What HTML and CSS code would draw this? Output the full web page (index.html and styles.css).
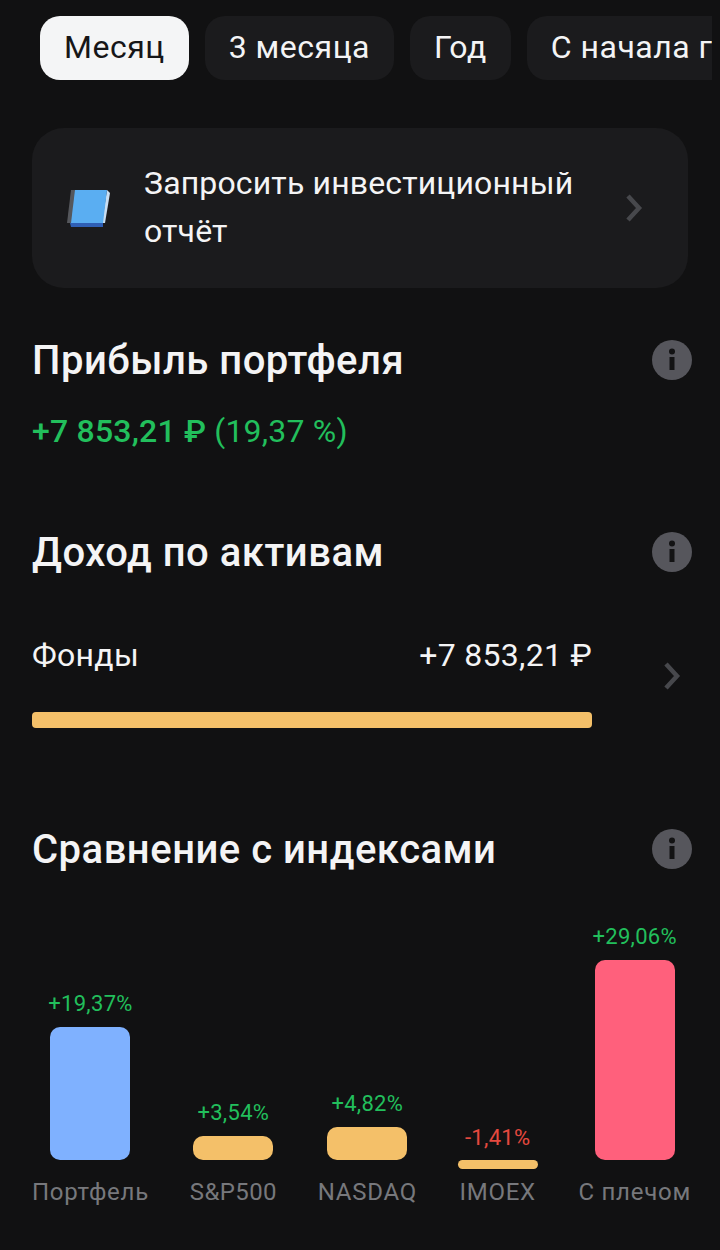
FILE: index.html
```html
<!DOCTYPE html>
<html lang="ru">
<head>
<meta charset="utf-8">
<title>Портфель</title>
<link rel="stylesheet" href="styles.css">
</head>
<body>
<main class="page">
  <nav class="tabs">
    <div class="tab tab-active">Месяц</div>
    <div class="tab">3 месяца</div>
    <div class="tab">Год</div>
    <div class="tab">С начала года</div>
  </nav>

  <section class="report">
    <svg class="book" viewBox="0 0 50 46" width="50" height="46" aria-hidden="true">
      <polygon points="3,38 7,5 12,5 8,38" fill="#55575c"/>
      <polygon points="6,38 11,37 39,38 39,42 7,42" fill="#2f5fb5"/>
      <polygon points="43,5 46,8 41,38 38,38" fill="#c9def2"/>
      <polygon points="11,5 43,5 39,38 7,38" fill="#5aaef2"/>
    </svg>
    <div class="report-text">Запросить инвестиционный отчёт</div>
    <svg class="chev" viewBox="0 0 20 30" width="20" height="30" aria-hidden="true"><polyline points="4,3 15,15 4,27" fill="none" stroke="#47484c" stroke-width="4.500"/></svg>
  </section>

  <section class="block block-profit">
    <div class="head">
      <h2>Прибыль портфеля</h2>
      <svg class="info" viewBox="0 0 40 40" width="40" height="40" aria-hidden="true"><circle cx="20" cy="20" r="20" fill="#56565c"/><circle cx="20" cy="11.500" r="3" fill="#131314"/><rect x="17.500" y="17" width="5" height="13" fill="#131314"/></svg>
    </div>
    <p class="profit"><b>+7 853,21 ₽</b> (19,37 %)</p>
  </section>

  <section class="block block-income">
    <div class="head">
      <h2>Доход по активам</h2>
      <svg class="info" viewBox="0 0 40 40" width="40" height="40" aria-hidden="true"><circle cx="20" cy="20" r="20" fill="#56565c"/><circle cx="20" cy="11.500" r="3" fill="#131314"/><rect x="17.500" y="17" width="5" height="13" fill="#131314"/></svg>
    </div>
    <div class="asset">
      <div class="asset-main">
        <div class="asset-row"><span>Фонды</span><span>+7 853,21 ₽</span></div>
        <div class="asset-bar"></div>
      </div>
      <svg class="chev" viewBox="0 0 20 30" width="20" height="30" aria-hidden="true"><polyline points="4,3 15,15 4,27" fill="none" stroke="#47484c" stroke-width="4.500"/></svg>
    </div>
  </section>

  <section class="block block-compare">
    <div class="head">
      <h2>Сравнение с индексами</h2>
      <svg class="info" viewBox="0 0 40 40" width="40" height="40" aria-hidden="true"><circle cx="20" cy="20" r="20" fill="#56565c"/><circle cx="20" cy="11.500" r="3" fill="#131314"/><rect x="17.500" y="17" width="5" height="13" fill="#131314"/></svg>
    </div>
    <div class="chart">
      <div class="col">
        <div class="plot"><span class="val">+19,37%</span><div class="bar blue" style="height:133px"></div></div>
        <div class="under"></div>
        <span class="name">Портфель</span>
      </div>
      <div class="col">
        <div class="plot"><span class="val">+3,54%</span><div class="bar yellow" style="height:24px"></div></div>
        <div class="under"></div>
        <span class="name name-tight">S&amp;P500</span>
      </div>
      <div class="col">
        <div class="plot"><span class="val">+4,82%</span><div class="bar yellow" style="height:33px"></div></div>
        <div class="under"></div>
        <span class="name">NASDAQ</span>
      </div>
      <div class="col">
        <div class="plot"><span class="val neg">-1,41%</span></div>
        <div class="under"><div class="bar yellow thin" style="height:9px"></div></div>
        <span class="name">IMOEX</span>
      </div>
      <div class="col">
        <div class="plot"><span class="val">+29,06%</span><div class="bar pink" style="height:200px"></div></div>
        <div class="under"></div>
        <span class="name">С плечом</span>
      </div>
    </div>
  </section>
</main>
</body>
</html>
```
FILE: styles.css
```css
* { box-sizing: border-box; }
html, body { margin: 0; height: 100%; background: #111112; }
body {
  font-family: Roboto, "Noto Sans", sans-serif;
  color: #f4f4f5;
  overflow: hidden;
}
.page { height: 1250px; overflow: hidden; padding-top: 16px; }

.tabs {
  display: flex;
  gap: 16px;
  margin: 0 8px 0 40px;
  overflow: hidden;
}
.tab {
  flex: none;
  height: 64px;
  padding: 0 24px 2px;
  display: flex;
  align-items: center;
  font-size: 32px;
  letter-spacing: 0.5px;
  background: #1b1b1d;
  border-radius: 20px;
  white-space: nowrap;
}
.tab-active { background: #f4f5f6; color: #161618; }

.report {
  margin: 48px 32px 0;
  height: 160px;
  background: #1b1b1d;
  border-radius: 32px;
  display: flex;
  align-items: center;
  padding: 0 32px;
}
.book { flex: none; margin-right: 30px; }
.report-text {
  width: 440px;
  margin-top: -2px;
  font-size: 32px;
  line-height: 48px;
  letter-spacing: 0.15px;
}
.report .chev { margin-left: auto; margin-right: 12px; }

.block { margin: 0 28px 0 32px; }
.block-profit { margin-top: 52px; }
.block-income { margin-top: 80px; }
.block-compare { margin-top: 101px; }

.head { display: flex; justify-content: space-between; align-items: center; height: 40px; }
h2 { margin: 2px 0 0; font-size: 40px; font-weight: 500; letter-spacing: 0.5px; line-height: 40px; }

.profit {
  margin: 30px 0 0;
  font-size: 32px;
  line-height: 42px;
  letter-spacing: 0.2px;
  color: #22bf5c;
}
.profit b { font-weight: 500; }

.asset { display: flex; align-items: center; margin-top: 63px; }
.asset-main { width: 560px; }
.asset-row {
  display: flex;
  justify-content: space-between;
  font-size: 32px;
  line-height: 40px;
  letter-spacing: 0.3px;
}
.asset-bar { height: 16px; margin-top: 37px; background: #f4c069; border-radius: 4px; }
.asset .chev { margin-left: 70px; margin-bottom: 11px; }

.chart {
  display: flex;
  justify-content: space-between;
  margin-top: 47px;
  width: 659px;
  align-items: flex-start;
}
.col { display: flex; flex-direction: column; align-items: center; }
.plot {
  height: 244px;
  display: flex;
  flex-direction: column;
  justify-content: flex-end;
  align-items: center;
}
.under { height: 16px; }
.val { font-size: 22px; line-height: 24px; margin-bottom: 11px; color: #22bf5c; letter-spacing: 0.3px; }
.val.neg { color: #e5493f; margin-bottom: 10px; }
.bar { width: 80px; border-radius: 10px; }
.bar.thin { border-radius: 5px; }
.blue { background: #7fb1ff; }
.yellow { background: #f4c069; }
.pink { background: #ff607c; }
.name { font-size: 24px; line-height: 32px; color: #77787c; letter-spacing: 0.75px; white-space: nowrap; }
.name-tight { letter-spacing: 0.4px; }
```
